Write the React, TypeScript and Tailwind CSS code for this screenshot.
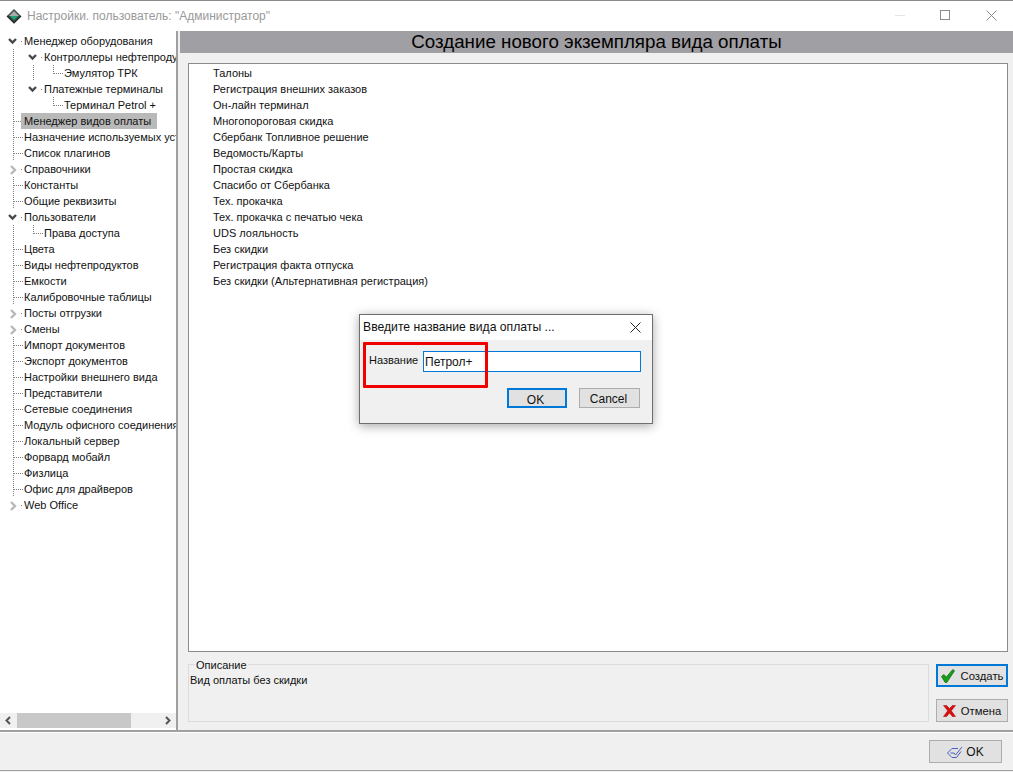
const font = 'font-["Liberation_Sans",sans-serif]';

type Node = {
  label: string;
  // what to draw in each 20px column in front of the label
  cols: ('line' | 'tee' | 'elbow' | 'open' | 'closed' | 'none')[];
  selected?: boolean;
};

const tree: Node[] = [
  { label: 'Менеджер оборудования', cols: ['open'] },
  { label: 'Контроллеры нефтепродуктов', cols: ['line', 'open'] },
  { label: 'Эмулятор ТРК', cols: ['line', 'line', 'elbow'] },
  { label: 'Платежные терминалы', cols: ['line', 'open'] },
  { label: 'Терминал Petrol +', cols: ['line', 'none', 'elbow'] },
  { label: 'Менеджер видов оплаты', cols: ['tee'], selected: true },
  { label: 'Назначение используемых устройств', cols: ['tee'] },
  { label: 'Список плагинов', cols: ['tee'] },
  { label: 'Справочники', cols: ['closed'] },
  { label: 'Константы', cols: ['tee'] },
  { label: 'Общие реквизиты', cols: ['tee'] },
  { label: 'Пользователи', cols: ['open'] },
  { label: 'Права доступа', cols: ['line', 'elbow'] },
  { label: 'Цвета', cols: ['tee'] },
  { label: 'Виды нефтепродуктов', cols: ['tee'] },
  { label: 'Емкости', cols: ['tee'] },
  { label: 'Калибровочные таблицы', cols: ['tee'] },
  { label: 'Посты отгрузки', cols: ['closed'] },
  { label: 'Смены', cols: ['closed'] },
  { label: 'Импорт документов', cols: ['tee'] },
  { label: 'Экспорт документов', cols: ['tee'] },
  { label: 'Настройки внешнего вида', cols: ['tee'] },
  { label: 'Представители', cols: ['tee'] },
  { label: 'Сетевые соединения', cols: ['tee'] },
  { label: 'Модуль офисного соединения', cols: ['tee'] },
  { label: 'Локальный сервер', cols: ['tee'] },
  { label: 'Форвард мобайл', cols: ['tee'] },
  { label: 'Физлица', cols: ['tee'] },
  { label: 'Офис для драйверов', cols: ['tee'] },
  { label: 'Web Office', cols: ['closed'] },
];

const payments = [
  'Талоны',
  'Регистрация внешних заказов',
  'Он-лайн терминал',
  'Многопороговая скидка',
  'Сбербанк Топливное решение',
  'Ведомость/Карты',
  'Простая скидка',
  'Спасибо от Сбербанка',
  'Тех. прокачка',
  'Тех. прокачка с печатью чека',
  'UDS лояльность',
  'Без скидки',
  'Регистрация факта отпуска',
  'Без скидки (Альтернативная регистрация)',
];

function TreeCol({ kind }: { kind: Node['cols'][number] }) {
  const dots = { stroke: '#808080', strokeDasharray: '1 1', shapeRendering: 'crispEdges' as const };
  return (
    <svg width="20" height="16" className="shrink-0">
      {kind === 'line' && <path d="M10.5 0V16" fill="none" {...dots} />}
      {kind === 'tee' && <path d="M10.5 0V16M11 8.5H21" fill="none" {...dots} />}
      {kind === 'elbow' && <path d="M10.5 0V8.5M11 8.5H21" fill="none" {...dots} />}
      {kind === 'open' && (
        <>
          <path d="M6 6L9.5 9.5L13 6" fill="none" stroke="#484848" strokeWidth="2.4" />
          <path d="M18 8.5H19" fill="none" {...dots} />
        </>
      )}
      {kind === 'closed' && (
        <>
          <path d="M8 5L12 9L8 13" fill="none" stroke="#b8b8b8" strokeWidth="2.4" />
          <path d="M18 8.5H19" fill="none" {...dots} />
        </>
      )}
    </svg>
  );
}

function TreeRow({ node }: { node: Node }) {
  return (
    <div className="flex h-4 items-stretch pl-[3px] whitespace-nowrap">
      {node.cols.map((c, i) => (
        <TreeCol key={i} kind={c} />
      ))}
      <span
        className={`h-4 pl-[3px] pr-[3px] -ml-[2px] leading-4 text-[#111] ${
          node.selected ? 'w-[136px] bg-[#b9b9b9]' : ''
        }`}
      >
        {node.label}
      </span>
    </div>
  );
}

function LogoIcon() {
  return (
    <svg width="16" height="16" viewBox="0 0 16 16">
      <path d="M8 1L15 8L8 15L1 8Z" fill="#3f4a44" />
      <path d="M8 3L13 8H3Z" fill="#ffffff" fillOpacity="0.55" />
      <path d="M4 8H12L8 12Z" fill="#19a67f" />
      <path d="M1 8L8 15L15 8" fill="none" stroke="#1e2622" strokeWidth="1.2" />
    </svg>
  );
}

function CheckIcon() {
  return (
    <svg width="14" height="14" viewBox="0 0 14 14" className="shrink-0">
      <path d="M0.5 7.5L3 5.5L5.2 8.2L11.8 0.5L13.5 1.8L5.8 13.5H4.2Z" fill="#15a015" stroke="#0b5f0b" strokeWidth="0.7" />
    </svg>
  );
}

function CrossIcon() {
  return (
    <svg width="13" height="12" viewBox="0 0 13 12" className="shrink-0">
      <path d="M0.5 0.5H3.6L6.5 3.6L9.4 0.5H12.5L8.3 5.8L12.5 11.5H9.4L6.5 8L3.6 11.5H0.5L4.7 5.8Z" fill="#d80e0e" stroke="#a80000" strokeWidth="0.5" />
    </svg>
  );
}

function OkIcon() {
  return (
    <svg width="16" height="12" viewBox="0 0 16 12" fill="none" stroke="#4a5fc0">
      <path d="M0.5 7L5 2.5H11" />
      <path d="M0.5 7L5 11.5H9.5L14 5.5" />
      <path d="M3.5 7H7L8.5 9L15 1" />
    </svg>
  );
}

function DialogClose() {
  return (
    <svg width="11" height="11" viewBox="0 0 11 11" stroke="#222" fill="none">
      <path d="M0.5 0.5L10.5 10.5M10.5 0.5L0.5 10.5" />
    </svg>
  );
}

export default function App() {
  return (
    <div className={`${font} relative flex h-[772px] w-[1013px] flex-col overflow-hidden bg-[#f0f0f0] text-[11px] text-[#111]`}>
      {/* Title bar */}
      <div className="flex h-[31px] shrink-0 items-center border-t border-[#8a8a8a] bg-white pl-[6px] pr-[16px]">
        <LogoIcon />
        <span className="ml-[5px] text-[12px] text-[#9a9a9a]">Настройки. пользователь: "Администратор"</span>
        <div className="ml-auto flex items-center gap-[35px] pb-[2px]">
          <div className="h-px w-[10px] bg-[#e5e5e5]" />
          <div className="mr-[1px] h-[10px] w-[10px] border border-[#8c8c8c]" />
          <svg width="11" height="11" viewBox="0 0 11 11" stroke="#8c8c8c" fill="none">
            <path d="M0.5 0.5L10.5 10.5M10.5 0.5L0.5 10.5" />
          </svg>
        </div>
      </div>

      {/* Main area */}
      <div className="flex h-[701px] shrink-0 border-b-2 border-[#a0a0a0]">
        {/* Tree */}
        <div className="flex w-[178px] shrink-0 flex-col border-r-2 border-[#a0a0a0] bg-white">
          <div className="flex-1 overflow-hidden pt-[2px]">
            {tree.map((n) => (
              <TreeRow key={n.label} node={n} />
            ))}
          </div>
          <div className="mb-[2px] flex h-[15px] items-center bg-[#f0f0f0]">
            <svg width="17" height="15" viewBox="0 0 17 15" fill="none" stroke="#555" strokeWidth="2">
              <path d="M10 4L6.5 7.5L10 11" />
            </svg>
            <div className="h-[15px] w-[114px] bg-[#c8c8c8]" />
            <svg width="17" height="15" viewBox="0 0 17 15" fill="none" stroke="#555" strokeWidth="2" className="ml-auto">
              <path d="M7 4L10.5 7.5L7 11" />
            </svg>
          </div>
        </div>

        {/* Right panel */}
        <div className="flex min-w-0 flex-1 flex-col pl-[2px]">
          <div className="flex h-[22px] shrink-0 items-center justify-center bg-[#a09fa3] pt-[1px] text-[18.75px] text-black">
            Создание нового экземпляра вида оплаты
          </div>
          <div className="mt-[10px] ml-[8px] mr-[5px] h-[589px] shrink-0 border border-[#8a8a8f] bg-white pl-[24px] pt-[1px]">
            {payments.map((p) => (
              <div key={p} className="h-4 leading-4">
                {p}
              </div>
            ))}
          </div>
          <div className="mt-[12px] ml-[8px] mr-[5px] flex items-start justify-between">
            <div className="relative h-[58px] w-[741px] border border-[#dcdcdc]">
              <span className="absolute -top-[6px] left-[6px] bg-[#f0f0f0] px-[1px] leading-[13px]">Описание</span>
              <div className="pl-[1px] pt-[9px] leading-[13px]">Вид оплаты без скидки</div>
            </div>
            <div className="flex w-[72px] flex-col gap-[12px] text-[11.3px]">
              <button className="flex h-[23px] items-center justify-center gap-[6px] border-2 border-[#0078d7] bg-[#e1e1e1] pt-[1px]">
                <CheckIcon />
                Создать
              </button>
              <button className="flex h-[23px] items-center justify-center gap-[5px] border border-[#adadad] bg-[#e1e1e1] pt-[1px]">
                <CrossIcon />
                Отмена
              </button>
            </div>
          </div>
        </div>
      </div>

      {/* Footer */}
      <div className="flex h-[39px] shrink-0 items-center justify-end border-b border-[#a0a0a0] border-t border-t-white pr-[11px]">
        <button className="flex h-[23px] w-[73px] items-center justify-center gap-[3px] border border-[#adadad] bg-[#e1e1e1] text-[12px]">
          <OkIcon />
          OK
        </button>
      </div>

      {/* Dialog */}
      <div className="absolute left-[359px] top-[314px] flex h-[110px] w-[294px] flex-col border border-[#6e6e6e] bg-[#f0f0f0] shadow-[0_2px_10px_rgba(0,0,0,0.35)]">
        <div className="flex h-[25px] shrink-0 items-center justify-between bg-white pl-[3px] pr-[11px] text-[12.2px]">
          <span>Введите название вида оплаты ...</span>
          <DialogClose />
        </div>
        <div className="flex items-center pl-[9px] pr-[11px] pt-[11px]">
          <span className="w-[54px] pb-[2px]">Название</span>
          <div className="flex h-[21px] flex-1 items-center border border-[#0078d7] bg-white pl-[1px] text-[12px]">Петрол+</div>
        </div>
        <div className="flex justify-end gap-[12px] pr-[12px] pt-[16px] text-[12px]">
          <button className="h-[20px] w-[60px] border-2 border-[#0078d7] bg-[#e1e1e1] pr-[3px] pt-[1px]">OK</button>
          <button className="h-[20px] w-[61px] border border-[#adadad] bg-[#e1e1e1] pr-[2px] pt-[1px]">Cancel</button>
        </div>
      </div>

      {/* Red annotation */}
      <div className="absolute left-[363px] top-[342px] h-[46px] w-[125px] rounded-[1px] border-[3px] border-[#f00000]" />
    </div>
  );
}
